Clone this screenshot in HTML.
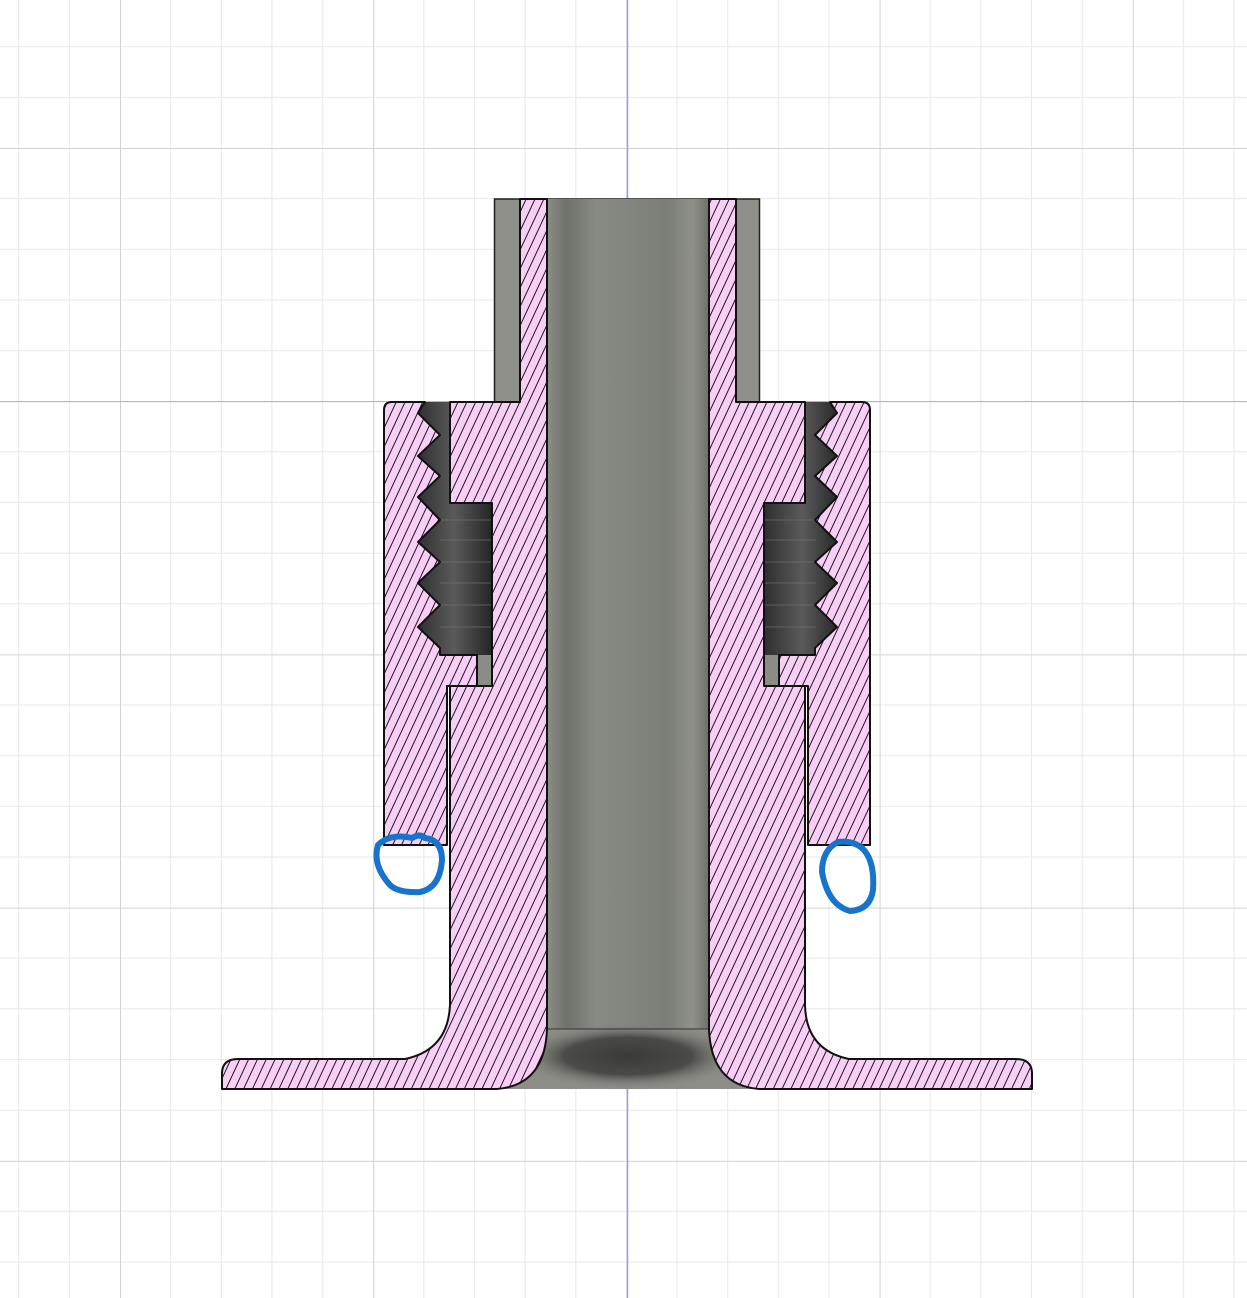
<!DOCTYPE html>
<html><head><meta charset="utf-8"><style>html,body{margin:0;padding:0;background:#fff}svg{display:block}</style></head>
<body>
<svg width="1247" height="1298" viewBox="0 0 1247 1298" xmlns="http://www.w3.org/2000/svg">
<defs>
<pattern id="grid" patternUnits="userSpaceOnUse" x="120" y="148" width="253.2" height="253.2">
<g stroke="#e7e7e7" stroke-width="1">
<line x1="50.6" y1="0" x2="50.6" y2="253.2"/><line x1="101.3" y1="0" x2="101.3" y2="253.2"/><line x1="151.9" y1="0" x2="151.9" y2="253.2"/><line x1="202.6" y1="0" x2="202.6" y2="253.2"/>
<line y1="50.6" x1="0" y2="50.6" x2="253.2"/><line y1="101.3" x1="0" y2="101.3" x2="253.2"/><line y1="151.9" x1="0" y2="151.9" x2="253.2"/><line y1="202.6" x1="0" y2="202.6" x2="253.2"/>
</g>
<g stroke="#d2d2d2" stroke-width="1"><line x1="0.5" y1="0" x2="0.5" y2="253.2"/><line y1="0.5" x1="0" y2="0.5" x2="253.2"/></g>
</pattern>
<pattern id="hatch" patternUnits="userSpaceOnUse" width="8" height="20" patternTransform="rotate(25)">
<rect width="8" height="20" fill="#f8cdf6"/>
<line x1="1" y1="0" x2="1" y2="20" stroke="#1a1a1a" stroke-width="1"/>
</pattern>
<linearGradient id="bore" x1="0" x2="1" y1="0" y2="0">
<stop offset="0" stop-color="#8c8e86"/><stop offset="0.12" stop-color="#6f716b"/><stop offset="0.3" stop-color="#878a83"/><stop offset="0.5" stop-color="#83857f"/><stop offset="0.75" stop-color="#7b7e77"/><stop offset="0.9" stop-color="#90928a"/><stop offset="1" stop-color="#6d6f69"/>
</linearGradient>
<linearGradient id="thr" x1="0" x2="1" y1="0" y2="0">
<stop offset="0" stop-color="#2c2c2c"/><stop offset="0.5" stop-color="#5a5a5a"/><stop offset="1" stop-color="#222"/>
</linearGradient>
<radialGradient id="flare" cx="0.5" cy="0.5" r="0.5">
<stop offset="0" stop-color="#3a3a36"/><stop offset="0.55" stop-color="#4a4b46"/><stop offset="1" stop-color="#8a8c85" stop-opacity="0"/>
</radialGradient>
</defs>
<rect width="1247" height="1298" fill="url(#grid)"/>
<line x1="0" y1="401.5" x2="1247" y2="401.5" stroke="#ea9f9b" stroke-width="1"/>
<line x1="627.5" y1="0" x2="627.5" y2="1298" stroke="#9d99ec" stroke-width="1.5"/>

<rect x="494.5" y="199" width="265" height="203" fill="#8e9089" stroke="#222" stroke-width="1.5"/>
<rect x="547" y="199" width="162" height="890" fill="url(#bore)"/>
<path d="M547,1029 L709,1029 Q712,1080 760,1089 L497,1089 Q544,1080 547,1029 Z" fill="#8c8d86"/>
<ellipse cx="628" cy="1056" rx="115" ry="34" fill="url(#flare)"/>
<line x1="547" y1="1029" x2="709" y2="1029" stroke="#333" stroke-width="1"/>

<rect x="414" y="402" width="80" height="285" fill="url(#thr)"/>
<rect x="762" y="402" width="80" height="285" fill="url(#thr)"/>
<g stroke="#777" stroke-width="1" opacity="0.6">
<line x1="440" y1="520" x2="492" y2="520"/><line x1="440" y1="540" x2="492" y2="540"/><line x1="440" y1="562" x2="492" y2="562"/><line x1="440" y1="583" x2="492" y2="583"/><line x1="440" y1="605" x2="492" y2="605"/><line x1="440" y1="627" x2="492" y2="627"/>
<line x1="764" y1="520" x2="816" y2="520"/><line x1="764" y1="540" x2="816" y2="540"/><line x1="764" y1="562" x2="816" y2="562"/><line x1="764" y1="583" x2="816" y2="583"/><line x1="764" y1="605" x2="816" y2="605"/><line x1="764" y1="627" x2="816" y2="627"/>
</g>
<rect x="477" y="655" width="15" height="31" fill="#8a8c85"/>
<rect x="764" y="655" width="15" height="31" fill="#8a8c85"/>

<g fill="url(#hatch)" stroke="#111" stroke-width="2" stroke-linejoin="round">
<path d="M520,199 L547,199 L547,1029 Q545,1085 497,1089 L222,1089 L222,1072 Q223,1059 238,1059 L405,1059 Q448,1050 450,1005 L450,686 L492,686 L492,503 L450,503 L450,402 L520,402 Z"/>
<path d="M384,845 L384,410 Q384,402 392,402 L425,402 L418,413 L440,435 L418,456 L440,476 L418,497 L440,520 L418,542 L440,562 L418,583 L440,605 L418,627 L440,648 L440,655 L477,655 L477,686 L447,686 L447,845 Z"/>
<path d="M736,199 L709,199 L709,1029 Q711,1085 759,1089 L1032,1089 L1032,1072 Q1031,1059 1016,1059 L849,1059 Q806,1050 805,1005 L805,686 L764,686 L764,503 L805,503 L805,402 L736,402 Z"/>
<path d="M870,845 L870,410 Q870,402 862,402 L830,402 L837,413 L815,435 L837,456 L815,476 L837,497 L815,520 L837,542 L815,562 L837,583 L815,605 L837,627 L815,648 L815,655 L779,655 L779,686 L808,686 L808,845 Z"/>
</g>

<path d="M412,838 Q390,833 378,845 Q372,865 390,885 Q398,893 420,892 Q440,888 442,860 Q442,840 425,838 Q420,833 412,838 Z" fill="none" stroke="#1873cc" stroke-width="6" stroke-linecap="round"/>
<path d="M838,842 Q822,850 822,872 Q828,905 850,911 Q870,910 873,890 Q875,860 862,848 Q852,840 838,842 Z" fill="none" stroke="#1873cc" stroke-width="6" stroke-linecap="round"/>
</svg>
</body></html>
